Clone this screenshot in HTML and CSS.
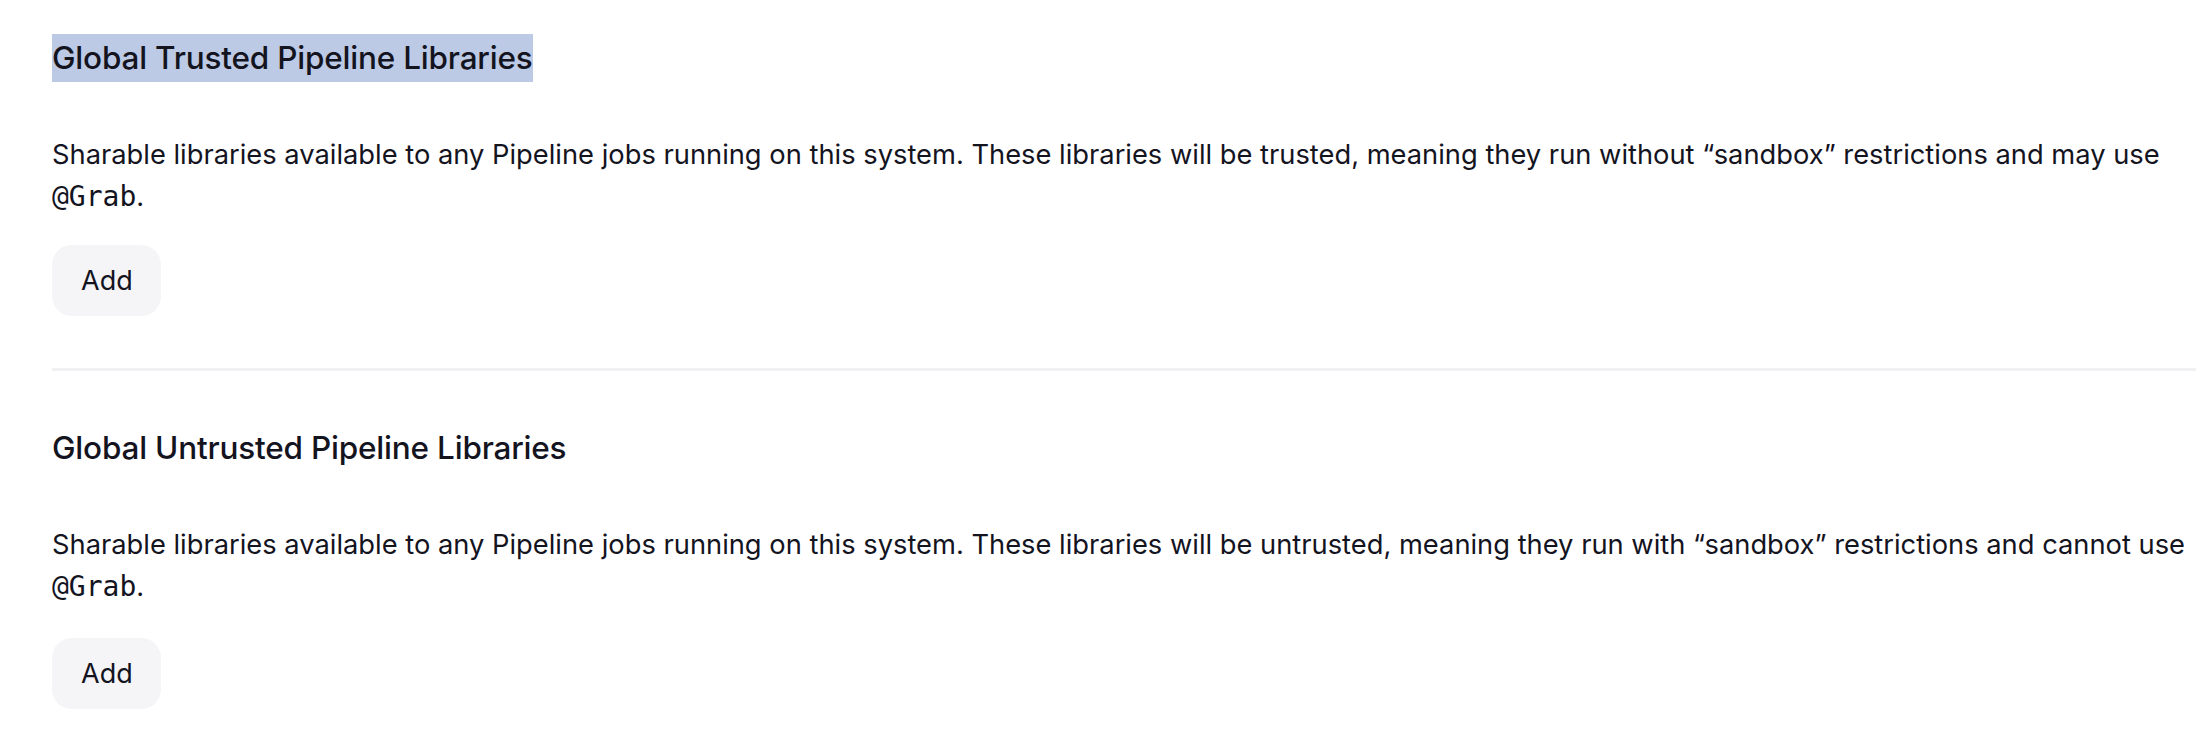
FILE: index.html
```html
<!DOCTYPE html>
<html lang="en">
<head>
<meta charset="utf-8">
<title>Global Pipeline Libraries</title>
<link rel="stylesheet" href="styles.css">
</head>
<body>
<div class="page">
  <section class="section">
    <h2 class="section-title"><span class="selected">Global Trusted Pipeline Libraries</span></h2>
    <p class="section-desc">Sharable libraries available to any Pipeline jobs running on this system. These libraries will be trusted, meaning they run without “sandbox” restrictions and may use <code class="code">@Grab</code>.</p>
    <button class="btn" type="button">Add</button>
  </section>
  <div class="separator"></div>
  <section class="section section-untrusted">
    <h2 class="section-title">Global Untrusted Pipeline Libraries</h2>
    <p class="section-desc">Sharable libraries available to any Pipeline jobs running on this system. These libraries will be untrusted, meaning they run with “sandbox” restrictions and cannot use <code class="code">@Grab</code>.</p>
    <button class="btn" type="button">Add</button>
  </section>
</div>
</body>
</html>
```
FILE: styles.css
```css
html, body {
  margin: 0;
  padding: 0;
  background: #ffffff;
}

body {
  font-family: Inter, "Noto Sans", "Liberation Sans", sans-serif;
  color: #14141f;
  -webkit-font-smoothing: antialiased;
}

.page {
  padding: 34px 0 0 52px;
}

.section {
  display: flex;
  flex-direction: column;
  align-items: flex-start;
}

.section-title {
  margin: 0;
  font-size: 31.5px;
  line-height: 48px;
  font-weight: 500;
  letter-spacing: -0.2px;
}

.selected {
  display: inline-block;
  line-height: 48px;
  background: #bccae6;
}

.section-desc {
  margin: 52px 0 0 0;
  font-size: 27.3px;
  line-height: 42px;
  font-weight: 400;
}

.code {
  font-family: "DejaVu Sans Mono", "Liberation Mono", monospace;
  font-size: 28px;
}

.btn {
  margin-top: 27px;
  height: 71px;
  padding: 0 28px 0 29px;
  border: none;
  border-radius: 20px;
  background: #f5f5f8;
  color: #14141f;
  font-family: inherit;
  font-size: 27px;
  font-weight: 400;
}

.section-untrusted .btn {
  margin-top: 30px;
}

.separator {
  margin-top: 52px;
  height: 3px;
  background: #f1f1f4;
}

.separator + .section {
  margin-top: 53px;
}
```
